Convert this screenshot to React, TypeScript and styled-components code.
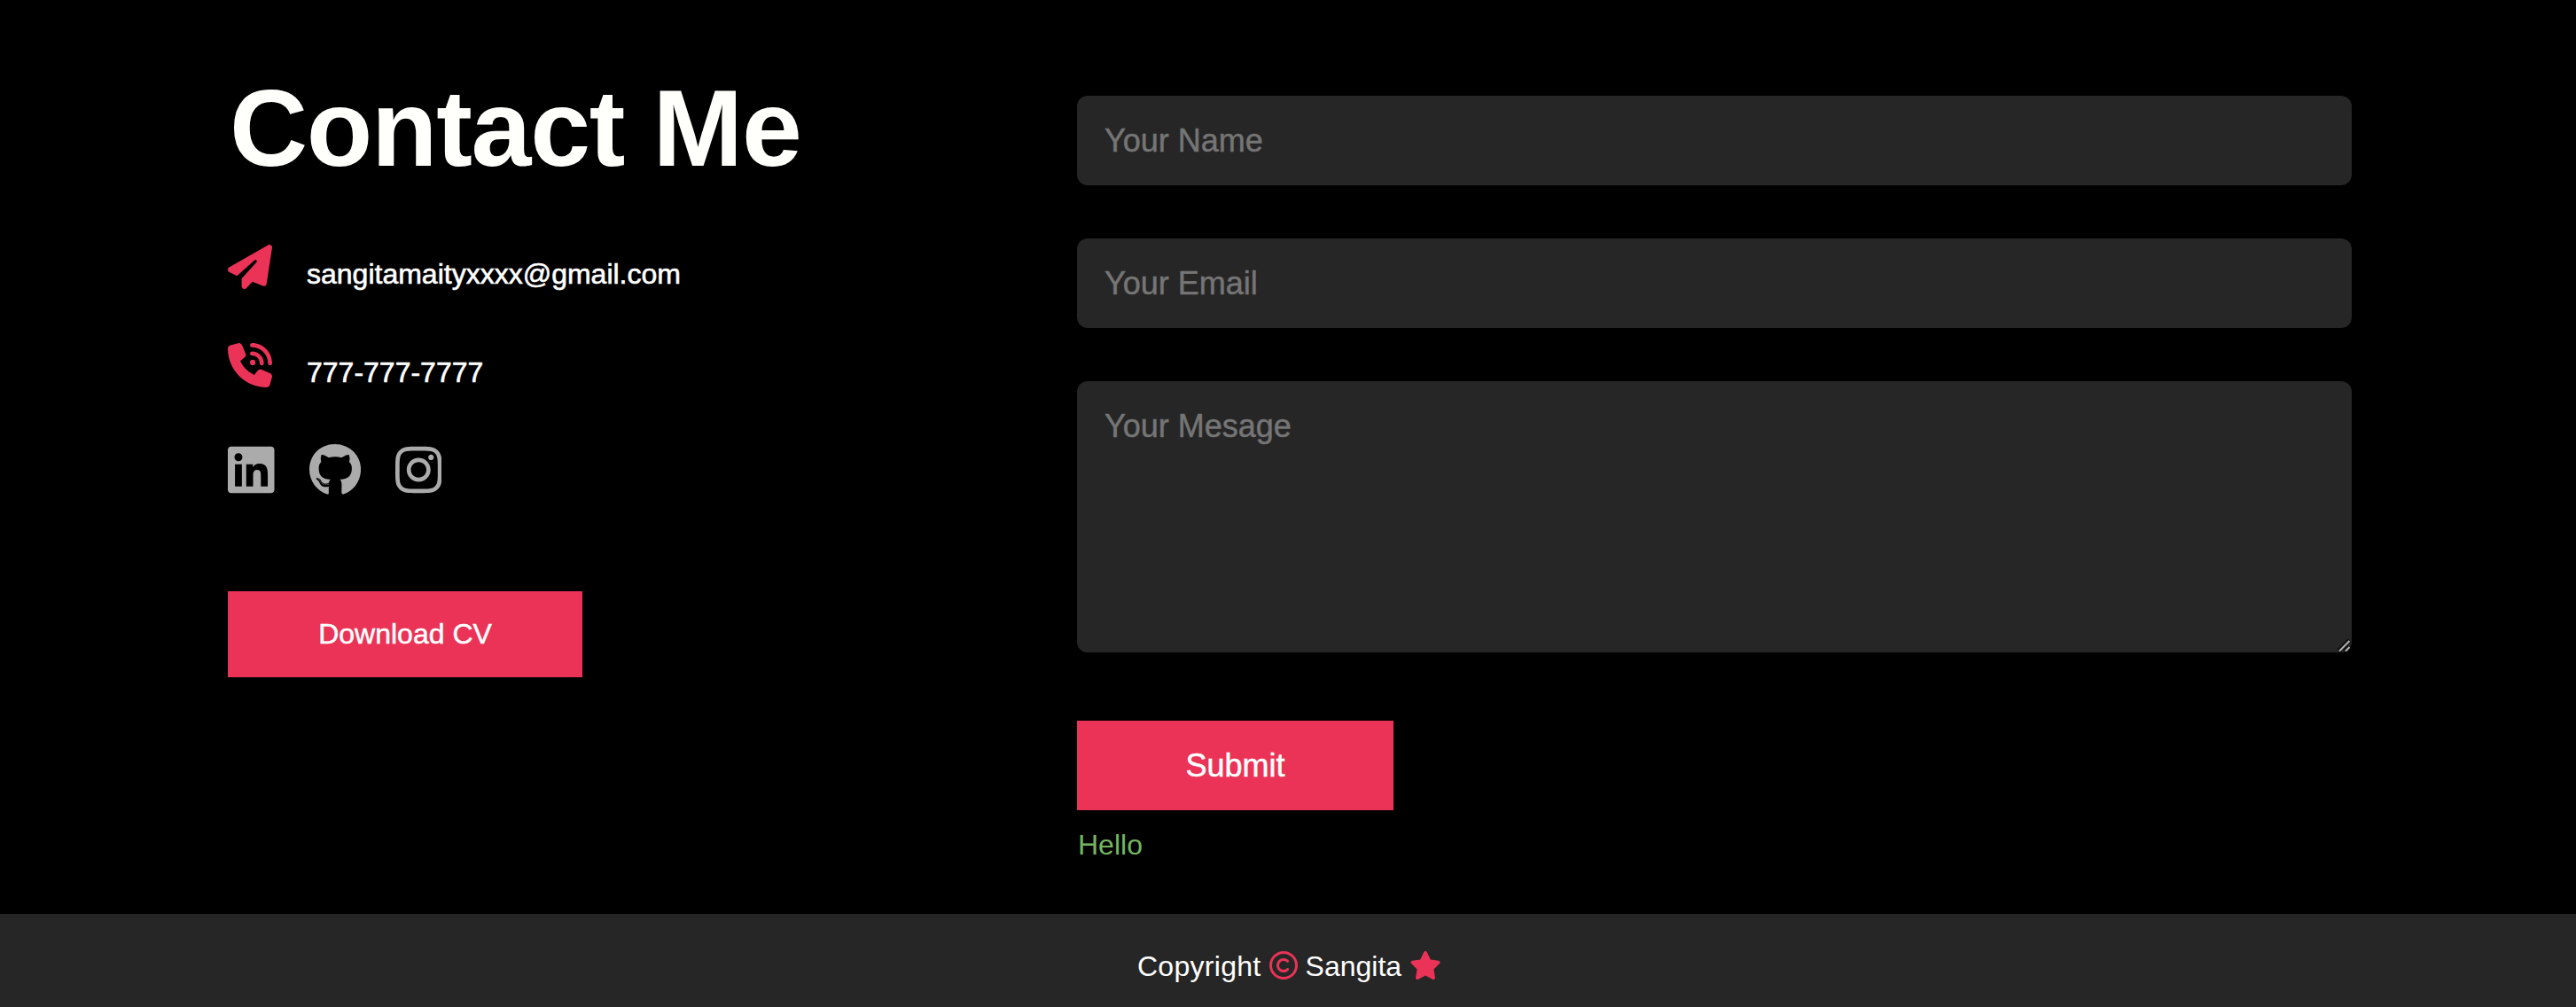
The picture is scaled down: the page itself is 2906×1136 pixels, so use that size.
import React from "react";
import styled, { createGlobalStyle } from "styled-components";
import {
  FaGithub,
  FaInstagram,
  FaLinkedin,
  FaPaperPlane,
  FaPhoneVolume,
  FaRegCopyright,
  FaStar,
} from "react-icons/fa6";

const accent = "#ea3356";
const panel = "#262626";

const GlobalStyle = createGlobalStyle`
  * {
    margin: 0;
    padding: 0;
    box-sizing: border-box;
    font-family: "Liberation Sans", Arial, sans-serif;
  }
  body {
    background: #000;
    color: #fff;
  }
`;

const Contact = styled.section`
  display: flex;
  justify-content: space-between;
  height: 1031px;
  padding: 0 253px 0 257px;
`;

const Details = styled.div`
  flex-basis: 35%;
  padding-top: 77px;
`;

const Title = styled.h1`
  margin-bottom: 61px;
  padding-left: 2px;
  font-size: 122px;
  font-weight: 700;
  line-height: 137px;
  height: 138px;
  letter-spacing: -1.3px;
  color: #fffffb;
  white-space: nowrap;
`;

const InfoRow = styled.p`
  display: flex;
  gap: 39px;
  height: 50px;
  margin-bottom: 61px;
  font-size: 32px;
  line-height: 50px;

  svg {
    width: 50px;
    height: 50px;
    color: ${accent};
  }
`;

const InfoText = styled.span`
  padding-top: 8px;
  -webkit-text-stroke: 0.6px #fff;
`;

const Socials = styled.nav`
  display: flex;
  gap: 39px;
  padding: 2px 0 107px;
`;

const SocialLink = styled.a<{ $width: number }>`
  display: flex;
  color: #ababab;

  svg {
    width: ${(p) => p.$width}px;
    height: 60px;
  }
`;

const Button = styled.button<{ $width: number; $height: number; $size: number }>`
  display: block;
  width: ${(p) => p.$width}px;
  height: ${(p) => p.$height}px;
  border: 0;
  background: ${accent};
  color: #fff;
  font-size: ${(p) => p.$size}px;
  cursor: pointer;
  -webkit-text-stroke: 0.5px #fff;
`;

const Form = styled.form`
  flex: 0 0 1438px;
  padding-top: 108px;
`;

const Field = styled.input`
  display: block;
  width: 100%;
  height: 101px;
  margin-bottom: 60px;
  padding: 0 31px;
  border: 0;
  border-radius: 12px;
  background: ${panel};
  color: #fff;
  font-size: 36px;

  &::placeholder {
    color: #757575;
    -webkit-text-stroke: 0.5px #757575;
  }
`;

const MessageBox = styled.div`
  position: relative;
  height: 306px;
  margin-bottom: 77px;
`;

const Message = styled(Field).attrs({ as: "textarea" })`
  height: 306px;
  margin: 0;
  padding: 30px 31px;
  line-height: 41px;
  resize: none;
`;

const Grip = styled.svg`
  position: absolute;
  right: 0;
  bottom: 0;
`;

const Status = styled.span`
  display: block;
  margin-top: 21px;
  padding-left: 1px;
  font-size: 32px;
  line-height: 36px;
  color: #74b65f;
`;

const Footer = styled.footer`
  display: flex;
  justify-content: center;
  align-items: center;
  gap: 9px;
  height: 105px;
  padding: 11px 0 0 3px;
  background: ${panel};
  font-size: 32px;
  line-height: 36px;
`;

const Credit = styled.span<{ $spacing?: number }>`
  padding-top: 2px;
  letter-spacing: ${(p) => p.$spacing ?? 0}px;
`;

const CopyrightIcon = styled(FaRegCopyright)`
  width: 32px;
  height: 32px;
  color: ${accent};
`;

const StarIcon = styled(FaStar)`
  width: 36px;
  height: 32px;
  color: ${accent};
`;

export default function App() {
  return (
    <>
      <GlobalStyle />
      <Contact>
        <Details>
          <Title>Contact Me</Title>
          <InfoRow>
            <FaPaperPlane />
            <InfoText>sangitamaityxxxx@gmail.com</InfoText>
          </InfoRow>
          <InfoRow>
            <FaPhoneVolume />
            <InfoText>777-777-7777</InfoText>
          </InfoRow>
          <Socials>
            <SocialLink $width={52.5} href="#linkedin" aria-label="LinkedIn"><FaLinkedin /></SocialLink>
            <SocialLink $width={58.1} href="#github" aria-label="GitHub"><FaGithub /></SocialLink>
            <SocialLink $width={52.5} href="#instagram" aria-label="Instagram"><FaInstagram /></SocialLink>
          </Socials>
          <Button type="button" $width={400} $height={97} $size={32}>Download CV</Button>
        </Details>
        <Form onSubmit={(e) => e.preventDefault()}>
          <Field type="text" placeholder="Your Name" />
          <Field type="email" placeholder="Your Email" />
          <MessageBox>
            <Message placeholder="Your Mesage" />
            <Grip width="18" height="18" viewBox="0 0 18 18" fill="none">
              <path d="M3 16.5 15.5 4M10.5 16.5 15.5 11.5" stroke="#111" strokeWidth="5" />
              <path d="M4 16.5 15.5 5M11 16.5 15.5 12" stroke="#b4b4b4" strokeWidth="2" />
            </Grip>
          </MessageBox>
          <Button type="submit" $width={357} $height={101} $size={36}>Submit</Button>
          <Status>Hello</Status>
        </Form>
      </Contact>
      <Footer>
        <Credit $spacing={0.3}>Copyright</Credit>
        <CopyrightIcon />
        <Credit>Sangita</Credit>
        <StarIcon />
      </Footer>
    </>
  );
}
